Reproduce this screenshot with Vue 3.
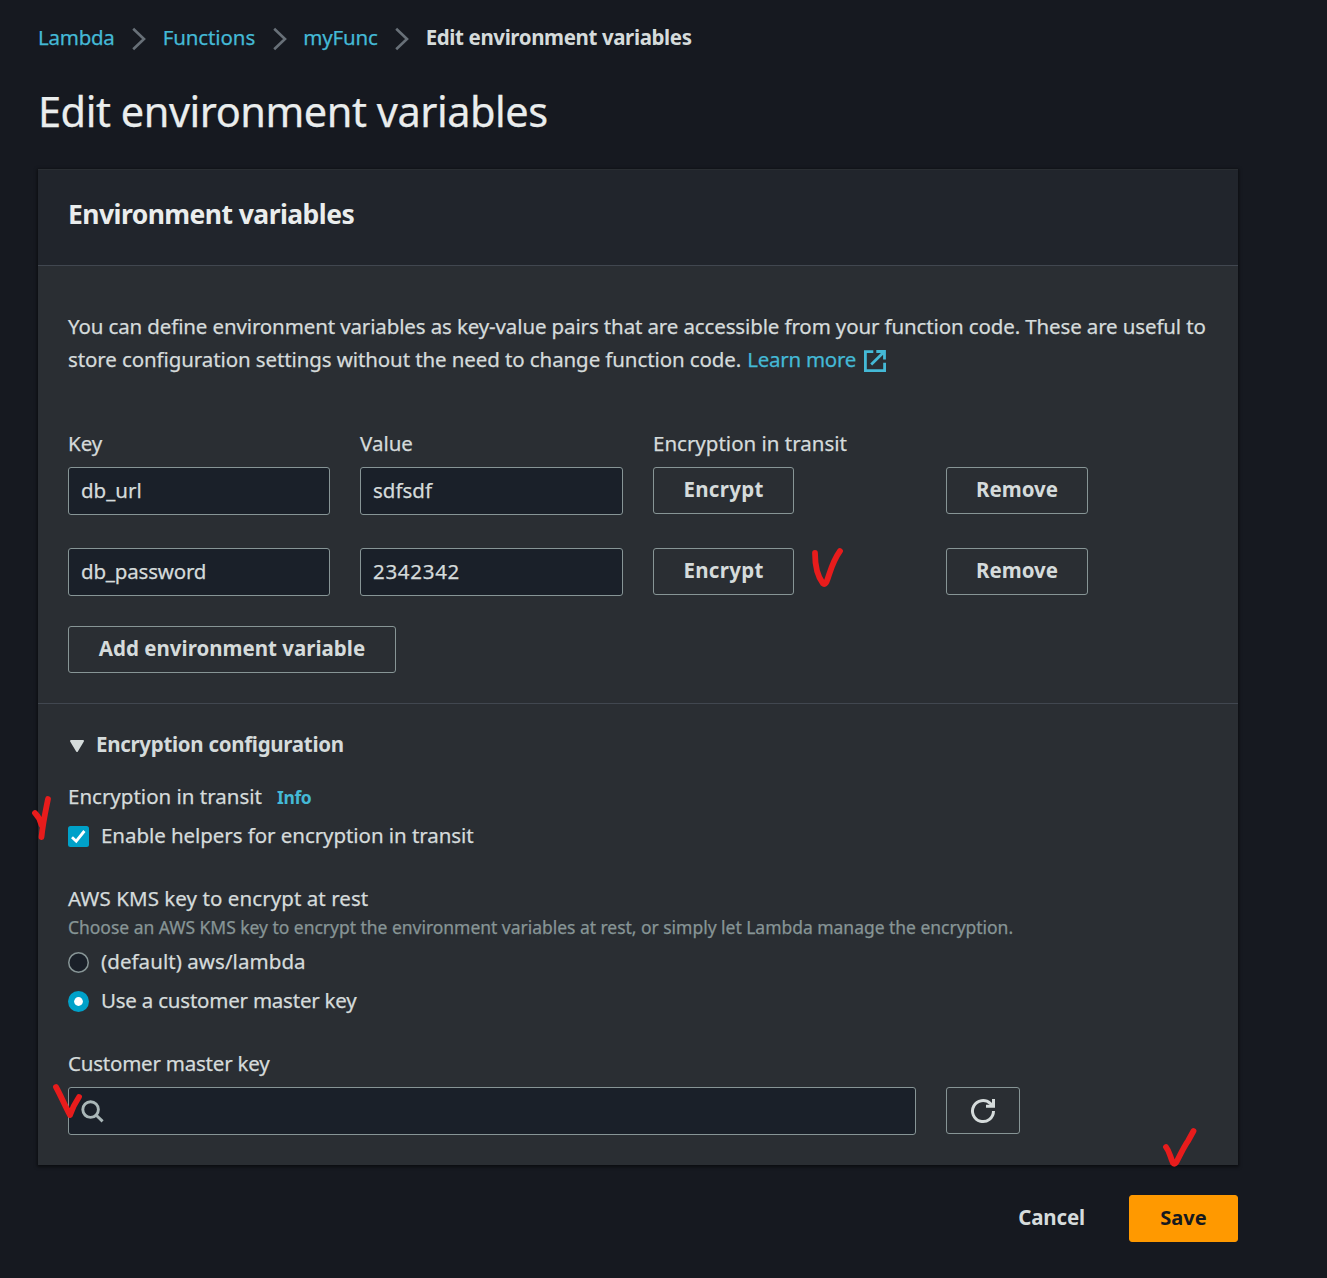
<script setup>
import { ref } from 'vue'

const crumbs = [
  { text: 'Lambda', cls: 'c1' },
  { text: 'Functions', cls: 'c2' },
  { text: 'myFunc', cls: 'c3' },
]
const rows = ref([
  { key: 'db_url', value: 'sdfsdf' },
  { key: 'db_password', value: '2342342' },
])
</script>

<template>
  <div class="page">
    <nav class="crumbs">
      <template v-for="c in crumbs" :key="c.text">
        <a class="link" :class="c.cls">{{ c.text }}</a>
        <svg class="chev" width="14" height="24" viewBox="0 0 14 24"><path d="M1.2 1.8 L12 12 L1.2 22.2" fill="none" stroke="#687078" stroke-width="2.6" /></svg>
      </template>
      <b class="current">Edit environment variables</b>
    </nav>
    <h1><span>Edit environment variables</span></h1>

    <section class="card">
      <header class="head"><h2>Environment variables</h2></header>

      <div class="vars">
        <div class="intro">
          <div class="line l1">You can define environment variables as key-value pairs that are accessible from your function code. These are useful to</div>
          <div class="line"><span class="l2">store configuration settings without the need to change function code.</span><a class="link l3">Learn more</a><svg class="ext" width="22" height="22" viewBox="0 0 22 22" fill="none" stroke="#44b9d6" stroke-width="2.8"><path d="M9.3 1.6 H1.4 V20.6 H20.6 V12.7" /><path d="M12.3 1.5 H20.5 V9.5 M20.2 1.8 L7.2 14.4" /></svg></div>
        </div>

        <div class="grid labels">
          <span class="t-key">Key</span><span class="t-value">Value</span><span class="t-transit">Encryption in transit</span>
        </div>
        <div v-for="(r, i) in rows" :key="r.key" class="grid row">
          <div class="field"><span :class="'k' + i">{{ r.key }}</span></div>
          <div class="field"><span :class="'v' + i">{{ r.value }}</span></div>
          <div class="cell">
            <button class="btn encrypt"><span>Encrypt</span></button>
            <svg v-if="i === 1" class="mark m-encrypt" width="40" height="50" viewBox="0 0 40 50"><path d="M10 11 C10 23 13 35 18 41.5 C19.5 43 21 41 21.5 40 C25 31 27 20 35 9" /></svg>
          </div>
          <div class="cell"><button class="btn remove"><span>Remove</span></button></div>
        </div>
        <button class="btn add"><span>Add environment variable</span></button>
      </div>

      <div class="config">
        <div class="expander">
          <svg width="16" height="13" viewBox="0 0 16 13"><path d="M2 1 H14 L8 11 Z" fill="#d5dbdb" stroke="#d5dbdb" stroke-width="2" stroke-linejoin="round" /></svg>
          <b>Encryption configuration</b>
        </div>
        <div class="transit"><span class="t-transit">Encryption in transit</span><b class="link info">Info</b></div>
        <div class="option check">
          <svg width="21" height="21" viewBox="0 0 21 21"><rect width="21" height="21" rx="2.5" fill="#00a1c9" /><path d="M4 11.3 L8.2 15.2 L16.4 5" fill="none" stroke="#fff" stroke-width="2.8" /></svg>
          <span class="t-helpers">Enable helpers for encryption in transit</span>
        </div>
        <div class="kms"><span>AWS KMS key to encrypt at rest</span></div>
        <div class="desc"><span>Choose an AWS KMS key to encrypt the environment variables at rest, or simply let Lambda manage the encryption.</span></div>
        <div class="option radio">
          <svg width="21" height="21" viewBox="0 0 21 21"><circle cx="10.5" cy="10.5" r="9.75" fill="#1a2029" stroke="#879596" stroke-width="1.5" /></svg>
          <span class="t-default">(default) aws/lambda</span>
        </div>
        <div class="option radio">
          <svg width="21" height="21" viewBox="0 0 21 21"><circle cx="10.5" cy="10.5" r="10.5" fill="#00a1c9" /><circle cx="10.5" cy="10.5" r="4.4" fill="#fff" /></svg>
          <span class="t-custom">Use a customer master key</span>
        </div>
        <div class="cmk"><span>Customer master key</span></div>
        <div class="search-row">
          <div class="field search">
            <svg width="24" height="24" viewBox="0 0 24 24" fill="none" stroke="#aab7b8" stroke-width="2.9"><circle cx="9.6" cy="9.6" r="7.8" /><path d="M15 15 L21.6 21.4" /></svg>
          </div>
          <button class="btn refresh">
            <svg width="26" height="26" viewBox="0 0 26 26" fill="none" stroke="#d5dbdb" stroke-width="3"><path d="M23.5 13 A10.5 10.5 0 1 1 20.2 5.4 L22.5 7.5" /><path d="M23.5 1 V8.2 H16" /></svg>
          </button>
        </div>
        <svg class="mark m-helpers" width="30" height="54" viewBox="0 0 30 54"><path d="M8 19 C11 22 13 25 14.5 31 M21 5 C19 15 16 28 14.5 43" /></svg>
        <svg class="mark m-cmk" width="40" height="46" viewBox="0 0 40 46"><path d="M9 8 C14 17 18 27 23 36 C25 30 28 24 32 18" /></svg>
        <svg class="mark m-save" width="44" height="50" viewBox="0 0 44 50"><path d="M11 22 C15 27 15 32 18 38 C20 40 21.5 37 22 36 C25 30 30 20 33 16 L38.5 6" /></svg>
      </div>
    </section>

    <footer>
      <b class="cancel">Cancel</b>
      <button class="save"><span>Save</span></button>
    </footer>
  </div>
</template>

<style>
body { background: #161920; }
</style>

<style scoped>
.page {
  box-sizing: border-box;
  width: 1327px;
  height: 1278px;
  padding: 20px 89px 0 38px;
  background: #161920;
  color: #d5dbdb;
  font: 20.5px/33px "Noto Sans", "Open Sans", sans-serif;
  -webkit-text-stroke: .25px currentColor;
  white-space: nowrap;
  overflow: hidden;
}
svg { display: block; flex: none; }
b, h2, .btn, .save { -webkit-text-stroke: 0; }
.link { color: #44b9d6; }
.crumbs { display: flex; height: 34px; align-items: center; }
.chev { margin: 3px 16.5px 0 17.5px; }
.c1 { letter-spacing: -.25px; }
.c2 { letter-spacing: -.1px; }
.c3 { letter-spacing: -.15px; }
.current { letter-spacing: -.39px; }
h1 { margin: 27px 0 0; height: 60px; font-size: 41.5px; line-height: 60px; font-weight: 400; letter-spacing: -.46px; color: #eaeded; }
.card {
  box-sizing: border-box;
  width: 1200px;
  height: 996px;
  margin-top: 28px;
  background: #2a2e33;
  box-shadow: 0 1px 3px 1px rgba(0, 0, 0, .5);
}
.head {
  box-sizing: border-box;
  height: 97px;
  padding: 27px 30px 0;
  background: #21252c;
  border-top: 1px solid #2a2e33;
  border-bottom: 1px solid #414750;
}
h2 { margin: 0; font-size: 26.5px; line-height: 35px; letter-spacing: -.56px; color: #eaeded; }
.vars {
  box-sizing: border-box;
  height: 438px;
  padding: 44px 30px 0;
  border-bottom: 1px solid #414750;
}
.line { display: flex; }
.l1 { letter-spacing: -.127px; }
.l2 { letter-spacing: -.1px; }
.l3 { margin-left: 6px; letter-spacing: -.25px; }
.ext { margin: 7px 0 0 7.5px; }
.grid { display: grid; grid-template-columns: 262px 263px 263px 262px; column-gap: 30px; }
.labels { margin-top: 51px; height: 40px; }
.row { height: 48px; margin-bottom: 33px; }
.row + .row { margin-bottom: 30px; }
.k1 { letter-spacing: -.18px; }
.v1 { letter-spacing: .7px; }
.cell { position: relative; }
.field {
  box-sizing: border-box;
  height: 48px;
  padding: 0 12px;
  line-height: 45px;
  background: #1a2029;
  border: 1px solid #879596;
  border-radius: 3px;
}
.btn, .save {
  box-sizing: border-box;
  display: flex;
  justify-content: center;
  height: 47px;
  padding: 0;
  font: bold 20.5px/43px "Noto Sans", "Open Sans", sans-serif;
  color: #d5dbdb;
  background: transparent;
  border: 1px solid #879596;
  border-radius: 3px;
}
.encrypt { width: 141px; letter-spacing: .3px; }
.remove { width: 142px; }
.add { width: 328px; }
.config { position: relative; padding: 24px 30px 0; }
.expander { display: flex; align-items: center; gap: 11px; height: 33px; padding-left: 1px; letter-spacing: -.3px; }
.expander svg { margin-top: 3px; }
.transit { display: flex; margin-top: 19px; height: 33px; }
.info { margin-left: 15px; font-size: 17.5px; line-height: 35px; letter-spacing: -.35px; }
.option { display: flex; align-items: center; gap: 12px; height: 33px; }
.option svg { margin-top: 1px; }
.check { margin-top: 6px; }
.t-helpers { letter-spacing: -.06px; }
.kms { margin-top: 30px; height: 33px; letter-spacing: .07px; }
.desc { font-size: 17.5px; line-height: 25px; height: 25px; letter-spacing: -.03px; color: #879596; }
.radio { margin-top: 5px; }
.radio + .radio { margin-top: 6px; }
.t-default { letter-spacing: .06px; }
.t-custom { letter-spacing: -.22px; }
.cmk { margin-top: 30px; height: 33px; letter-spacing: -.22px; }
.search-row { display: flex; gap: 30px; margin-top: 7px; }
.search { width: 848px; padding: 12px; }
.refresh { width: 74px; align-items: center; }
.mark { position: absolute; overflow: visible; fill: none; stroke: #e81c1c; stroke-width: 5.8; stroke-linecap: round; stroke-linejoin: round; }
.m-encrypt { left: 152px; top: -6px; }
.m-helpers { left: -11px; top: 90px; }
.m-cmk { left: 9px; top: 375px; }
.m-save { left: 1117px; top: 421px; }
footer { display: flex; justify-content: flex-end; margin-top: 30px; }
.cancel { line-height: 45px; margin-right: 44px; letter-spacing: -.15px; }
.save { width: 109px; background: #ff9900; border-color: #ff9900; color: #16191f; font-size: 20px; }
</style>
